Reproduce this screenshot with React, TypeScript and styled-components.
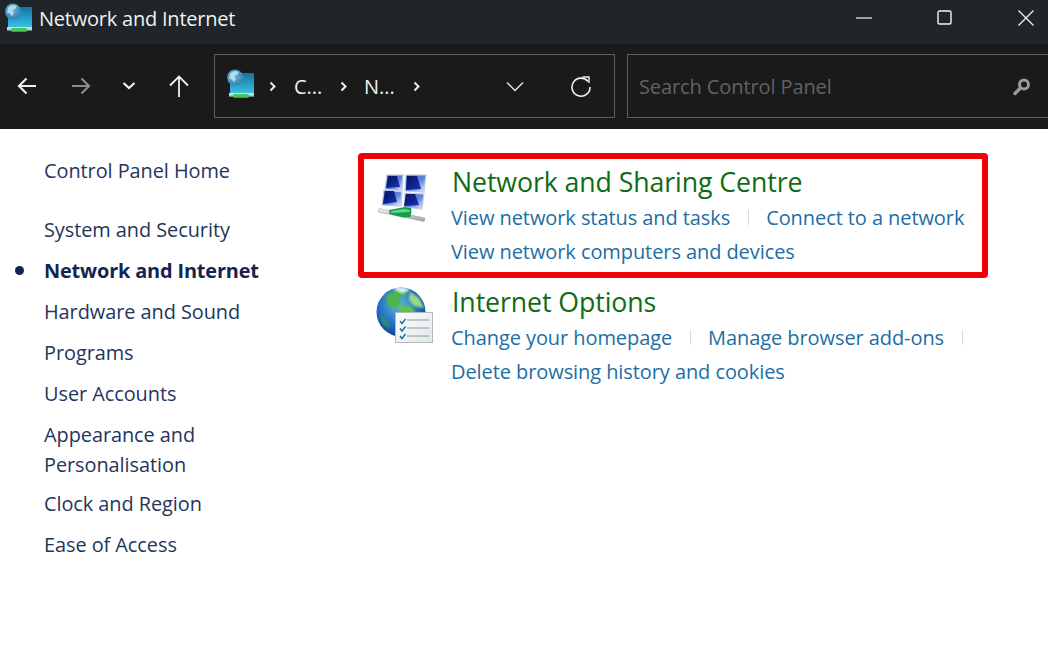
import React from "react";
import styled, { createGlobalStyle } from "styled-components";

const Global = createGlobalStyle`
  html, body { margin: 0; padding: 0; background: #fff; }
  body { font-family: "Open Sans", "Noto Sans", "Liberation Sans", sans-serif; }
  * { box-sizing: border-box; }
`;

const Page = styled.div`
  position: relative;
  width: 1048px;
  height: 672px;
  overflow: hidden;
  display: flex;
  flex-direction: column;
  background: #fff;
`;

const TitleBar = styled.div`
  height: 44px;
  flex: none;
  background: #1f2528;
  display: flex;
  align-items: center;
  padding-left: 3px;
`;

const TitleText = styled.div`
  margin-left: 4px;
  margin-top: -7px;
  color: #f2f2f2;
  font-size: 20px;
  letter-spacing: -0.22px;
  white-space: nowrap;
`;

const WindowControls = styled.div`
  margin-left: auto;
  display: flex;
  align-items: center;
  margin-top: -9px;
  padding-right: 14px;
  gap: 65px;
`;

const Toolbar = styled.div`
  height: 85px;
  flex: none;
  background: #1a1a1a;
  display: flex;
  align-items: center;
  padding-left: 16px;
  padding-bottom: 1px;
`;

const NavGroup = styled.div`
  display: flex;
  align-items: center;
  width: 198px;
  flex: none;
  gap: 32px;
`;

const ChevronSlot = styled.span`
  display: flex;
  margin-left: -2px;
`;

const AddressBox = styled.div`
  width: 401px;
  height: 64px;
  flex: none;
  border: 1px solid #5e5e5e;
  display: flex;
  align-items: center;
  padding-left: 10px;
  color: #f0f0f0;
  font-size: 20px;
`;

const Crumb = styled.span<{ $gap: number }>`
  width: 30px;
  white-space: nowrap;
  margin-left: ${(p) => p.$gap}px;
`;

const SepSlot = styled.span<{ $gap: number }>`
  display: flex;
  margin-left: ${(p) => p.$gap}px;
`;

const AddressActions = styled.div`
  margin-left: auto;
  display: flex;
  align-items: center;
  gap: 46px;
  padding-right: 22px;
`;

const SearchBox = styled.div`
  width: 440px;
  height: 64px;
  flex: none;
  margin-left: 12px;
  border: 1px solid #5e5e5e;
  display: flex;
  align-items: center;
  padding-left: 11px;
  color: #626262;
  font-size: 20px;
  letter-spacing: -0.1px;
`;

const SearchIconSlot = styled.div`
  position: absolute;
  left: 1012px;
  top: 77px;
  display: flex;
`;

const Content = styled.div`
  flex: 1;
  display: flex;
  background: #fff;
`;

const Sidebar = styled.nav`
  width: 358px;
  flex: none;
  padding: 24px 0 0 44px;
  display: flex;
  flex-direction: column;
`;

const SideItem = styled.div<{ $active?: boolean; $top?: number }>`
  position: relative;
  color: ${(p) => (p.$active ? "#14234f" : "#24355c")};
  font-size: 19.9px;
  line-height: 30px;
  font-weight: ${(p) => (p.$active ? 700 : 400)};
  margin-top: ${(p) => p.$top ?? 11}px;
  letter-spacing: ${(p) => (p.$active ? -0.15 : -0.05)}px;
`;

const Bullet = styled.span`
  position: absolute;
  left: -29px;
  top: 10px;
  width: 9px;
  height: 9px;
  border-radius: 50%;
  background: #14234f;
`;

const Main = styled.main`
  flex: 1;
  padding-top: 24px;
  display: flex;
  flex-direction: column;
`;

const Section = styled.section<{ $highlight?: boolean }>`
  width: 630px;
  height: 125px;
  display: flex;
  padding: 6px 0 0 14px;
  border: 6px solid ${(p) => (p.$highlight ? "#f00007" : "transparent")};
  border-radius: 4px;
  margin-bottom: -5px;
`;

const IconBox = styled.div<{ $x: number; $y: number }>`
  width: 74px;
  flex: none;
  display: flex;
  align-items: flex-start;
  padding-top: ${(p) => p.$y}px;
  margin-left: ${(p) => p.$x}px;
  margin-right: ${(p) => -p.$x}px;
`;

const SectionBody = styled.div`
  display: flex;
  flex-direction: column;
`;

const Heading = styled.div`
  color: #0f6b14;
  font-size: 26.7px;
  line-height: 33px;
  margin-bottom: 2px;
  letter-spacing: -0.08px;
  white-space: nowrap;
`;

const LinkRow = styled.div`
  display: flex;
  align-items: center;
  height: 34px;
  white-space: nowrap;
  margin-left: -1px;
`;

const TaskLink = styled.span`
  color: #1c6ea4;
  font-size: 20px;
  letter-spacing: -0.08px;
`;

const Divider = styled.span`
  width: 1px;
  height: 15px;
  background: #d9d9d9;
  margin: 0 17.5px;
`;

const AppGlyph = styled.svg<{ $lift: number }>`
  flex: none;
  margin-top: ${(p) => p.$lift}px;
`;

const NetworkIcon = ({ id, lift }: { id: string; lift: number }) => (
  <AppGlyph $lift={lift} width="32" height="32" viewBox="0 0 32 32">
    <defs>
      <linearGradient id={`scr${id}`} x1="0" y1="0" x2="0" y2="1">
        <stop offset="0" stopColor="#14749f" />
        <stop offset="1" stopColor="#38bfe2" />
      </linearGradient>
      <radialGradient id={`glb${id}`} cx="0.45" cy="0.4" r="0.75">
        <stop offset="0" stopColor="#6db8dc" />
        <stop offset="1" stopColor="#2274aa" />
      </radialGradient>
    </defs>
    <rect x="5" y="5" width="24" height="20" fill={`url(#scr${id})`} />
    <rect x="4" y="25" width="25" height="2" fill="#bfe0ea" />
    <rect x="4" y="27" width="25" height="1.6" fill="#aacdb4" />
    <rect x="8" y="26" width="16" height="3.8" rx="1.5" fill="#49c457" />
    <circle cx="10" cy="9.5" r="8" fill={`url(#glb${id})`} />
    <path d="M5 6c2-3 6-4 9-2l-2 3-3 1 2 3-2 3-3-3-2 0z" fill="#cfe9f4" opacity=".75" />
  </AppGlyph>
);

const Back = ({ color }: { color: string }) => (
  <svg width="22" height="22" viewBox="0 0 22 22" fill="none" stroke={color} strokeWidth="2.2">
    <path d="M20 11H3M10.500 3.500 3 11l7.500 7.500" />
  </svg>
);

const Forward = () => (
  <svg width="22" height="22" viewBox="0 0 22 22" fill="none" stroke="#8a8a8a" strokeWidth="2.2">
    <path d="M2 11h17M11.500 3.500 19 11l-7.500 7.500" />
  </svg>
);

const Up = () => (
  <svg width="22" height="24" viewBox="0 0 22 24" fill="none" stroke="#f0f0f0" strokeWidth="1.8">
    <path d="M11 23V3M2 11.500 11 2.500l9 9" />
  </svg>
);

const SmallChevron = () => (
  <svg width="14" height="10" viewBox="0 0 14 10" fill="none" stroke="#f0f0f0" strokeWidth="2.2">
    <path d="m1.500 2 5.500 5 5.500-5" />
  </svg>
);

const Sep = () => (
  <svg width="8" height="11" viewBox="0 0 8 11" fill="none" stroke="#f0f0f0" strokeWidth="2">
    <path d="m1.500 1.500 4 4-4 4" />
  </svg>
);

const ThinChevron = () => (
  <svg width="18" height="11" viewBox="0 0 18 11" fill="none" stroke="#e6e6e6" strokeWidth="1.4">
    <path d="m1 1.500 8 8 8-8" />
  </svg>
);

const Refresh = () => (
  <svg width="22" height="22" viewBox="0 0 22 22" fill="none" stroke="#f0f0f0" strokeWidth="1.600">
    <path d="M18 6.500A9 9 0 1 0 20 12" />
    <path d="M12.500 2H19v6" strokeWidth="1.400" />
  </svg>
);

const SearchIcon = () => (
  <svg width="20" height="20" viewBox="0 0 20 20" fill="none" stroke="#9a9a9a">
    <circle cx="12" cy="7.500" r="4.500" strokeWidth="3" />
    <path d="M8.500 11 3 16.500" strokeWidth="3.400" strokeLinecap="round" />
  </svg>
);

const Minimize = () => (
  <svg width="16" height="16" viewBox="0 0 16 16" stroke="#f2f2f2" strokeWidth="1.200">
    <path d="M0 8h16" />
  </svg>
);

const Maximize = () => (
  <svg width="16" height="16" viewBox="0 0 16 16" fill="none" stroke="#f2f2f2" strokeWidth="1.400">
    <rect x="1" y="1" width="13" height="13" rx="1.500" />
  </svg>
);

const Close = () => (
  <svg width="16" height="16" viewBox="0 0 16 16" fill="none" stroke="#f2f2f2" strokeWidth="1.300">
    <path d="M.5.5l15 15M15.500.5l-15 15" />
  </svg>
);

const SharingIcon = () => (
  <svg width="52" height="52" viewBox="0 0 52 52">
    <defs>
      <linearGradient id="pane" x1="0" y1="0" x2="1" y2="1">
        <stop offset="0" stopColor="#4464d8" />
        <stop offset=".55" stopColor="#5f82e2" />
        <stop offset="1" stopColor="#f2f5fc" />
      </linearGradient>
      <linearGradient id="paneDark" x1="0" y1="0" x2="1" y2="1">
        <stop offset="0" stopColor="#08125e" />
        <stop offset="1" stopColor="#1733b4" />
      </linearGradient>
      <linearGradient id="cable" x1="0" y1="0" x2="0" y2="1">
        <stop offset="0" stopColor="#f6f6f6" />
        <stop offset="1" stopColor="#98a1a3" />
      </linearGradient>
      <filter id="soft" x="-5%" y="-5%" width="110%" height="110%">
        <feGaussianBlur stdDeviation=".4" />
      </filter>
    </defs>
    <g filter="url(#soft)">
      <g stroke="#c4cee2" strokeWidth="1.200" fill="url(#pane)">
        <path d="M9 2h16l-1 16-17-2z" />
        <path d="M28 2h20l-2 17-19-1z" />
        <path d="M6 17l18 2-1 14-19-1z" />
        <path d="M27 20l19 1-2 15-18-2z" />
      </g>
      <g fill="url(#paneDark)">
        <path d="M10 3h9l3 11-14 1z" />
        <path d="M29 3h10l4 13-15 1z" />
        <path d="M7 18h9l3 11-14 2z" />
        <path d="M28 21h9l4 11-15 1z" />
      </g>
      <path d="M1 35.500l46 9.500-.8 3.500L0 39z" fill="url(#cable)" stroke="#8d9698" strokeWidth=".5" />
      <path d="M11 37l16-3 6 1 .5 3-1 6-7 .5-14-3.500z" fill="#159a4c" />
      <path d="M13 38l13-2 6 1-.5 2-18 1z" fill="#5fd68c" />
    </g>
  </svg>
);

const GlobeIcon = () => (
  <svg width="58" height="58" viewBox="0 0 58 58">
    <defs>
      <radialGradient id="ocean" cx=".45" cy=".35" r=".75">
        <stop offset="0" stopColor="#5fb6e8" />
        <stop offset=".6" stopColor="#1c68bc" />
        <stop offset="1" stopColor="#0d2f80" />
      </radialGradient>
      <linearGradient id="note" x1="0" y1="0" x2="1" y2="1">
        <stop offset="0" stopColor="#fdfdfd" />
        <stop offset="1" stopColor="#e2e7ea" />
      </linearGradient>
      <clipPath id="ball">
        <circle cx="25" cy="25" r="24.500" />
      </clipPath>
      <filter id="land" x="-10%" y="-10%" width="120%" height="120%">
        <feGaussianBlur stdDeviation="1.1" />
      </filter>
    </defs>
    <circle cx="25" cy="25" r="24.500" fill="url(#ocean)" />
    <g clipPath="url(#ball)">
      <g filter="url(#land)">
        <path d="M11 8c6-5 15-6 21-4l-3 5-6 1 2 6-5 6-7-2-3-7z" fill="#4cb64a" />
        <path d="M24 18l11 1 6 8-4 10-6 8-4-9-5-9z" fill="#5ac44e" />
        <path d="M34 5l9 6 5 10-10-2-5-6z" fill="#9bd884" />
        <path d="M3 28l7 4 4 10-7-5z" fill="#2f9f56" opacity=".8" />
        <path d="M16 1c6-2 13-1 18 2l-8 3z" fill="#eef8fc" opacity=".9" />
      </g>
    </g>
    <rect x="19.500" y="25.500" width="37" height="30" fill="url(#note)" stroke="#b2babe" strokeWidth="1" />
    <g fill="none" stroke="#1f6f9a" strokeWidth="1.500">
      <path d="M24 34l2 2.500 3.500-4.500M24 41.500l2 2.500 3.500-4.500M24 49l2 2.500 3.500-4.500" />
    </g>
    <g stroke="#8d979c" strokeWidth="1.200">
      <path d="M31 33h22M31 41h22M31 49h22" />
    </g>
  </svg>
);

export default function App() {
  return (
    <Page>
      <Global />
      <TitleBar>
        <NetworkIcon id="a" lift={-8} />
        <TitleText>Network and Internet</TitleText>
        <WindowControls>
          <Minimize />
          <Maximize />
          <Close />
        </WindowControls>
      </TitleBar>
      <Toolbar>
        <NavGroup>
          <Back color="#f0f0f0" />
          <Forward />
          <ChevronSlot><SmallChevron /></ChevronSlot>
          <Up />
        </NavGroup>
        <AddressBox>
          <NetworkIcon id="b" lift={-5} />
          <SepSlot $gap={12}><Sep /></SepSlot>
          <Crumb $gap={17}>C...</Crumb>
          <SepSlot $gap={16}><Sep /></SepSlot>
          <Crumb $gap={16}>N...</Crumb>
          <SepSlot $gap={19}><Sep /></SepSlot>
          <AddressActions>
            <ThinChevron />
            <Refresh />
          </AddressActions>
        </AddressBox>
        <SearchBox>Search Control Panel</SearchBox>
      </Toolbar>
      <SearchIconSlot><SearchIcon /></SearchIconSlot>
      <Content>
        <Sidebar>
          <SideItem $top={3}>Control Panel Home</SideItem>
          <SideItem $top={29}>System and Security</SideItem>
          <SideItem $active>
            <Bullet />
            Network and Internet
          </SideItem>
          <SideItem>Hardware and Sound</SideItem>
          <SideItem>Programs</SideItem>
          <SideItem>User Accounts</SideItem>
          <SideItem>Appearance and<br />Personalisation</SideItem>
          <SideItem $top={9}>Clock and Region</SideItem>
          <SideItem>Ease of Access</SideItem>
        </Sidebar>
        <Main>
          <Section $highlight>
            <IconBox $x={0} $y={8}><SharingIcon /></IconBox>
            <SectionBody>
              <Heading>Network and Sharing Centre</Heading>
              <LinkRow>
                <TaskLink>View network status and tasks</TaskLink>
                <Divider />
                <TaskLink>Connect to a network</TaskLink>
              </LinkRow>
              <LinkRow>
                <TaskLink>View network computers and devices</TaskLink>
              </LinkRow>
            </SectionBody>
          </Section>
          <Section>
            <IconBox $x={-2} $y={2}><GlobeIcon /></IconBox>
            <SectionBody>
              <Heading>Internet Options</Heading>
              <LinkRow>
                <TaskLink>Change your homepage</TaskLink>
                <Divider />
                <TaskLink>Manage browser add-ons</TaskLink>
                <Divider />
              </LinkRow>
              <LinkRow>
                <TaskLink>Delete browsing history and cookies</TaskLink>
              </LinkRow>
            </SectionBody>
          </Section>
        </Main>
      </Content>
    </Page>
  );
}
